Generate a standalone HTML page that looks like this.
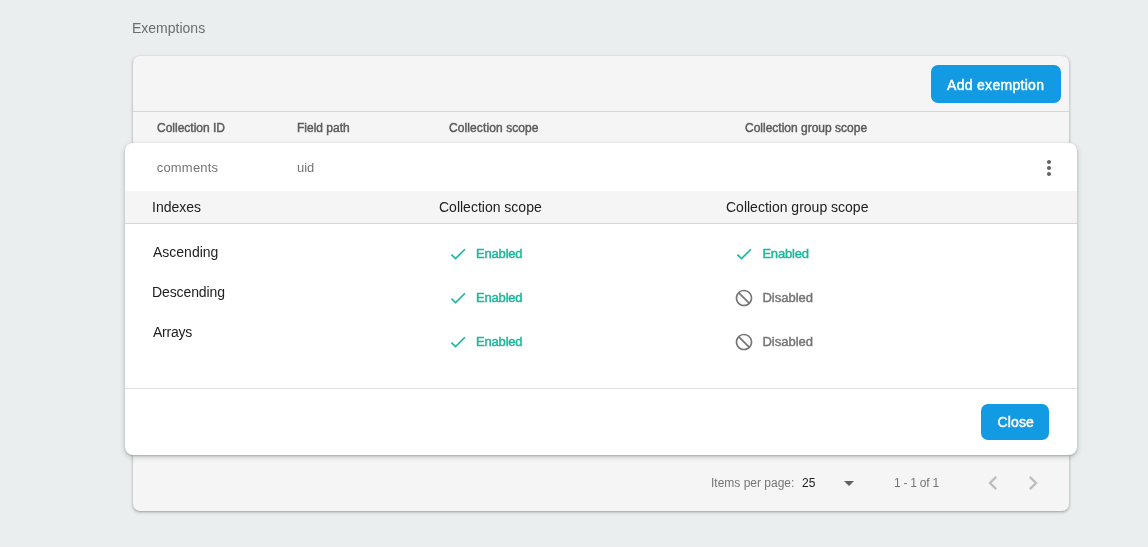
<!DOCTYPE html>
<html><head><meta charset="utf-8">
<style>
*{margin:0;padding:0;box-sizing:border-box}
html,body{width:1148px;height:547px;overflow:hidden}
body{background:#eaeeef;font-family:"Liberation Sans",sans-serif;position:relative}
#root{position:absolute;left:0;top:0;width:1148px;height:547px;will-change:transform}
.t{position:absolute;white-space:nowrap;line-height:normal}
.card{position:absolute;left:133px;top:56px;width:936px;height:455px;background:#f5f5f5;border-radius:7px;
 box-shadow:0 1px 2px 0 rgba(60,64,67,.3),0 1px 3px 1px rgba(60,64,67,.15)}
.dlg{position:absolute;left:125px;top:143px;width:952px;height:312px;background:#fff;border-radius:8px;
 box-shadow:0 1px 2px 0 rgba(60,64,67,.3),0 2px 5px 1px rgba(60,64,67,.18)}
.btn{position:absolute;background:#129ae3;border-radius:7px}
.md{-webkit-text-stroke:0.45px currentColor}
.hd{font-size:12px;color:#5c5c5c}
.bt{font-size:14px;color:#fff}
.gr{font-size:13px;color:#757575}
.dk{font-size:14px;color:#212121}
.en{font-size:13px;color:#1bb79b;letter-spacing:-.2px}
.ds{font-size:13px;color:#757575}
.ic{position:absolute;width:20px;height:20px}
.pg{font-size:12px;color:#757575}
</style></head><body><div id="root">
<div class="t" style="left:132px;top:20px;font-size:14px;color:#6b6e70">Exemptions</div>
<div class="card">
  <div class="btn" style="left:798px;top:9px;width:130px;height:38px"></div>
  <div style="position:absolute;left:0;top:55px;width:936px;height:1px;background:#d6d6d6"></div>
</div>
<div class="t hd md" style="left:157px;top:121px">Collection ID</div>
<div class="t hd md" style="left:297px;top:121px">Field path</div>
<div class="t hd md" style="left:449px;top:121px;letter-spacing:.1px">Collection scope</div>
<div class="t hd md" style="left:745px;top:121px">Collection group scope</div>
<div class="t bt md" style="left:947px;top:77px;letter-spacing:.3px">Add exemption</div>

<!-- pagination -->
<div class="t pg" style="left:711px;top:476px">Items per page:</div>
<div class="t pg" style="left:802px;top:476px;color:#212121">25</div>
<svg style="position:absolute;left:837px;top:471px;width:24px;height:24px" viewBox="0 0 24 24"><path d="M7 10l5 5 5-5z" fill="#616161"/></svg>
<div class="t pg" style="left:894px;top:476px;letter-spacing:-.25px">1 - 1 of 1</div>
<svg style="position:absolute;left:979px;top:469px;width:28px;height:28px" viewBox="0 0 24 24"><path d="M15.41 7.41L14 6l-6 6 6 6 1.41-1.41L10.83 12z" fill="#bdbdbd"/></svg>
<svg style="position:absolute;left:1019px;top:469px;width:28px;height:28px" viewBox="0 0 24 24"><path d="M10 6L8.59 7.41 13.17 12l-4.58 4.59L10 18l6-6z" fill="#bdbdbd"/></svg>

<div class="dlg">
  <div style="position:absolute;left:0;top:48px;width:952px;height:33px;background:#f5f5f5;border-bottom:1px solid #d6d6d6"></div>
  <div style="position:absolute;left:0;top:245px;width:952px;height:1px;background:#e0e0e0"></div>
  <svg style="position:absolute;left:911.5px;top:13px;width:24px;height:24px" viewBox="0 0 24 24"><path d="M12 8c1.1 0 2-.9 2-2s-.9-2-2-2-2 .9-2 2 .9 2 2 2zm0 2c-1.1 0-2 .9-2 2s.9 2 2 2 2-.9 2-2-.9-2-2-2zm0 6c-1.1 0-2 .9-2 2s.9 2 2 2 2-.9 2-2-.9-2-2-2z" fill="#616161"/></svg>
  <div class="btn" style="left:856px;top:261px;width:68px;height:36px"></div>
</div>
<div class="t gr" style="left:156.7px;top:160px;letter-spacing:.2px">comments</div>
<div class="t gr" style="left:297px;top:160px">uid</div>
<div class="t dk" style="left:152px;top:199px">Indexes</div>
<div class="t dk" style="left:439px;top:199px">Collection scope</div>
<div class="t dk" style="left:726px;top:199px">Collection group scope</div>
<div class="t dk" style="left:153px;top:244px">Ascending</div>
<div class="t dk" style="left:152px;top:284px;letter-spacing:-.1px">Descending</div>
<div class="t dk" style="left:153px;top:324px;letter-spacing:-.25px">Arrays</div>

<svg class="ic" style="left:448px;top:244px" viewBox="0 0 24 24"><path d="M9 16.17L4.83 12l-1.42 1.41L9 19 21 7l-1.41-1.41z" fill="#1bb79b"/></svg>
<svg class="ic" style="left:448px;top:288px" viewBox="0 0 24 24"><path d="M9 16.17L4.83 12l-1.42 1.41L9 19 21 7l-1.41-1.41z" fill="#1bb79b"/></svg>
<svg class="ic" style="left:448px;top:332px" viewBox="0 0 24 24"><path d="M9 16.17L4.83 12l-1.42 1.41L9 19 21 7l-1.41-1.41z" fill="#1bb79b"/></svg>
<div class="t en md" style="left:476.1px;top:246px">Enabled</div>
<div class="t en md" style="left:476.1px;top:290px">Enabled</div>
<div class="t en md" style="left:476.1px;top:334px">Enabled</div>

<svg class="ic" style="left:734px;top:244px" viewBox="0 0 24 24"><path d="M9 16.17L4.83 12l-1.42 1.41L9 19 21 7l-1.41-1.41z" fill="#1bb79b"/></svg>
<svg class="ic" style="left:734px;top:288px" viewBox="0 0 24 24"><path d="M12 2C6.48 2 2 6.48 2 12s4.48 10 10 10 10-4.48 10-10S17.520 2 12 2zm0 18c-4.42 0-8-3.58-8-8 0-1.85.63-3.55 1.69-4.9L16.9 18.31C15.55 19.37 13.85 20 12 20zm6.31-3.1L7.1 5.69C8.45 4.63 10.15 4 12 4c4.42 0 8 3.58 8 8 0 1.85-.63 3.55-1.69 4.9z" fill="#757575"/></svg>
<svg class="ic" style="left:734px;top:332px" viewBox="0 0 24 24"><path d="M12 2C6.48 2 2 6.48 2 12s4.48 10 10 10 10-4.48 10-10S17.520 2 12 2zm0 18c-4.42 0-8-3.58-8-8 0-1.85.63-3.55 1.69-4.9L16.9 18.31C15.55 19.37 13.85 20 12 20zm6.31-3.1L7.1 5.69C8.45 4.63 10.15 4 12 4c4.42 0 8 3.58 8 8 0 1.85-.63 3.55-1.69 4.9z" fill="#757575"/></svg>
<div class="t en md" style="left:762.4px;top:246px">Enabled</div>
<div class="t ds md" style="left:762.4px;top:290px">Disabled</div>
<div class="t ds md" style="left:762.4px;top:334px">Disabled</div>

<div class="t bt md" style="left:997.5px;top:414px;letter-spacing:.15px">Close</div>
</div></body></html>
